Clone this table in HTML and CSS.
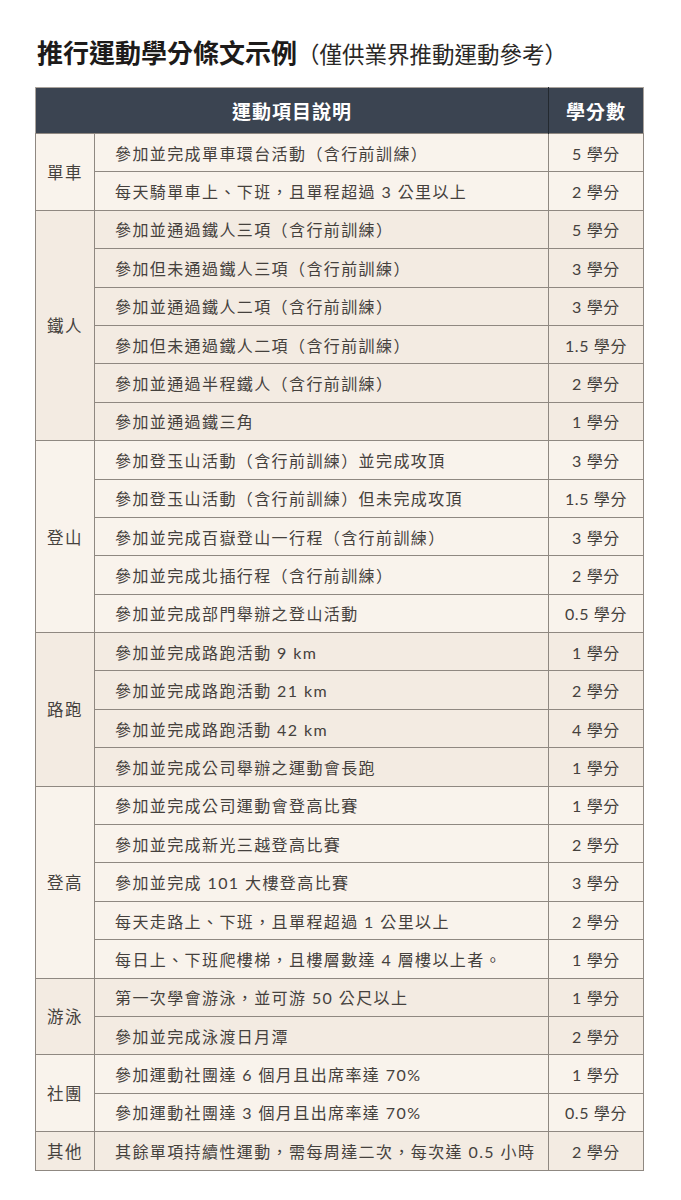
FILE: index.html
```html
<!DOCTYPE html>
<html lang="zh-Hant">
<head>
<meta charset="utf-8">
<title>推行運動學分條文示例</title>
<link rel="stylesheet" href="styles.css">
</head>
<body>
<div class="page">
  <h1 class="title"><span class="title-main">推行運動學分條文示例</span><span class="title-sub">（僅供業界推動運動參考）</span></h1>
  <table class="credits">
    <colgroup>
      <col class="c-cat">
      <col class="c-desc">
      <col class="c-credit">
    </colgroup>
    <thead>
      <tr><th colspan="2" class="h-desc">運動項目說明</th><th class="h-credit">學分數</th></tr>
    </thead>
    <tbody class="g-light">
      <tr><td rowspan="2" class="cat">單車</td><td class="desc">參加並完成單車環台活動（含行前訓練）</td><td class="credit">5 學分</td></tr>
      <tr><td class="desc">每天騎單車上、下班，且單程超過 3 公里以上</td><td class="credit">2 學分</td></tr>
    </tbody>
    <tbody class="g-dark">
      <tr><td rowspan="6" class="cat">鐵人</td><td class="desc">參加並通過鐵人三項（含行前訓練）</td><td class="credit">5 學分</td></tr>
      <tr><td class="desc">參加但未通過鐵人三項（含行前訓練）</td><td class="credit">3 學分</td></tr>
      <tr><td class="desc">參加並通過鐵人二項（含行前訓練）</td><td class="credit">3 學分</td></tr>
      <tr><td class="desc">參加但未通過鐵人二項（含行前訓練）</td><td class="credit">1.5 學分</td></tr>
      <tr><td class="desc">參加並通過半程鐵人（含行前訓練）</td><td class="credit">2 學分</td></tr>
      <tr><td class="desc">參加並通過鐵三角</td><td class="credit">1 學分</td></tr>
    </tbody>
    <tbody class="g-light">
      <tr><td rowspan="5" class="cat">登山</td><td class="desc">參加登玉山活動（含行前訓練）並完成攻頂</td><td class="credit">3 學分</td></tr>
      <tr><td class="desc">參加登玉山活動（含行前訓練）但未完成攻頂</td><td class="credit">1.5 學分</td></tr>
      <tr><td class="desc">參加並完成百嶽登山一行程（含行前訓練）</td><td class="credit">3 學分</td></tr>
      <tr><td class="desc">參加並完成北插行程（含行前訓練）</td><td class="credit">2 學分</td></tr>
      <tr><td class="desc">參加並完成部門舉辦之登山活動</td><td class="credit">0.5 學分</td></tr>
    </tbody>
    <tbody class="g-dark">
      <tr><td rowspan="4" class="cat">路跑</td><td class="desc">參加並完成路跑活動 9 km</td><td class="credit">1 學分</td></tr>
      <tr><td class="desc">參加並完成路跑活動 21 km</td><td class="credit">2 學分</td></tr>
      <tr><td class="desc">參加並完成路跑活動 42 km</td><td class="credit">4 學分</td></tr>
      <tr><td class="desc">參加並完成公司舉辦之運動會長跑</td><td class="credit">1 學分</td></tr>
    </tbody>
    <tbody class="g-light">
      <tr><td rowspan="5" class="cat">登高</td><td class="desc">參加並完成公司運動會登高比賽</td><td class="credit">1 學分</td></tr>
      <tr><td class="desc">參加並完成新光三越登高比賽</td><td class="credit">2 學分</td></tr>
      <tr><td class="desc">參加並完成 101 大樓登高比賽</td><td class="credit">3 學分</td></tr>
      <tr><td class="desc">每天走路上、下班，且單程超過 1 公里以上</td><td class="credit">2 學分</td></tr>
      <tr><td class="desc">每日上、下班爬樓梯，且樓層數達 4 層樓以上者。</td><td class="credit">1 學分</td></tr>
    </tbody>
    <tbody class="g-dark">
      <tr><td rowspan="2" class="cat">游泳</td><td class="desc">第一次學會游泳，並可游 50 公尺以上</td><td class="credit">1 學分</td></tr>
      <tr><td class="desc">參加並完成泳渡日月潭</td><td class="credit">2 學分</td></tr>
    </tbody>
    <tbody class="g-light">
      <tr><td rowspan="2" class="cat">社團</td><td class="desc">參加運動社團達 6 個月且出席率達 70%</td><td class="credit">1 學分</td></tr>
      <tr><td class="desc">參加運動社團達 3 個月且出席率達 70%</td><td class="credit">0.5 學分</td></tr>
    </tbody>
    <tbody class="g-dark">
      <tr><td class="cat">其他</td><td class="desc">其餘單項持續性運動，需每周達二次，每次達 0.5 小時</td><td class="credit">2 學分</td></tr>
    </tbody>
  </table>
</div>
</body>
</html>
```
FILE: styles.css
```css
html, body {
  margin: 0;
  padding: 0;
  background: #ffffff;
}
body {
  font-family: "Noto Sans CJK TC", "Noto Sans", sans-serif;
  color: #3a3734;
}
.page {
  padding: 36px 37px 0 35px;
}
.title {
  margin: 0 0 18px 2px;
  font-size: 26px;
  line-height: 31px;
  font-weight: normal;
  white-space: nowrap;
}
.title-main {
  font-weight: 700;
  color: #1d1b1a;
}
.title-sub {
  font-size: 22.5px;
  font-weight: 400;
  color: #2a2826;
}
.credits {
  width: 609px;
  border-collapse: collapse;
  table-layout: fixed;
  border: 1px solid #aaa39c;
}
.c-cat {
  width: 59px;
}
.c-credit {
  width: 95px;
}
.credits th {
  background: #3b4451;
  color: #ffffff;
  font-size: 19px;
  font-weight: 700;
  letter-spacing: 1px;
  height: 45px;
  padding: 0;
  text-align: center;
}
.credits th.h-credit {
  border-left: 1px solid #23292f;
}
.credits td {
  height: 38.4px;
  padding: 0;
  border: 1px solid #8f8881;
  font-family: "Lato", "Noto Sans CJK TC", sans-serif;
  font-size: 16px;
  letter-spacing: 1.4px;
  color: #45413d;
  white-space: nowrap;
  overflow: hidden;
  box-sizing: border-box;
}
.credits td.cat {
  text-align: center;
  font-size: 16.5px;
  letter-spacing: 1.5px;
}
.credits td.desc {
  padding-left: 20px;
}
.credits td.credit {
  text-align: center;
  letter-spacing: 0.6px;
}
.g-light td {
  background: #f9f3ec;
}
.g-dark td {
  background: #f3ebe2;
}
```
